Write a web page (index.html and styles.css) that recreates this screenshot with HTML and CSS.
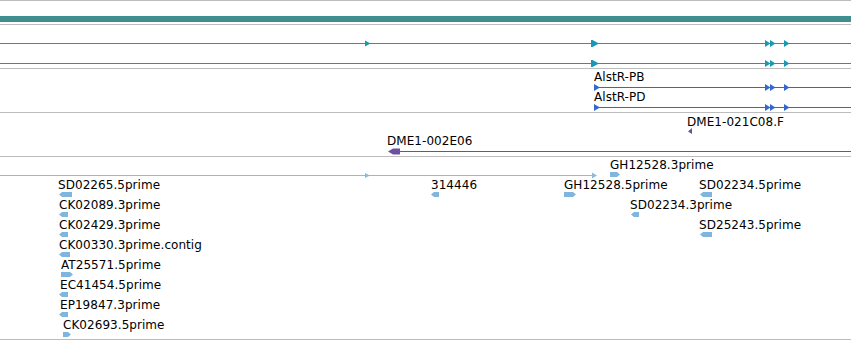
FILE: index.html
```html
<!DOCTYPE html>
<html>
<head>
<meta charset="utf-8">
<title>Tracks</title>
<link rel="stylesheet" href="styles.css">
</head>
<body>
<div class="panel">
  <div class="track t0"><div class="ruler"></div></div>

  <div class="track t1">
    <svg class="glyphs c-teal" width="851" height="43" viewBox="0 0 851 43">
      <rect x="0" y="18" width="851" height="1"/>
      <polygon points="365,15.5 370.5,18.5 365,21.5"/>
      <polygon points="591,15 592.5,15 599,18.5 592.5,22 591,22"/>
      <polygon points="765,15 770.5,18.5 765,22"/>
      <polygon points="770,15 775.5,18.5 770,22"/>
      <polygon points="784,15 789.5,18.5 784,22"/>
      <rect x="0" y="38" width="851" height="1"/>
      <polygon points="591,35 592.5,35 599,38.5 592.5,42 591,42"/>
      <polygon points="765,35 770.5,38.5 765,42"/>
      <polygon points="770,35 775.5,38.5 770,42"/>
      <polygon points="784,35 789.5,38.5 784,42"/>
    </svg>
  </div>

  <div class="track t2">
    <svg class="glyphs c-blue" width="851" height="43" viewBox="0 0 851 43">
      <rect x="594" y="18" width="257" height="1"/>
      <polygon points="594,15 600,18.5 594,22"/>
      <polygon points="765,15 770.5,18.5 765,22"/>
      <polygon points="770,15 775.5,18.5 770,22"/>
      <polygon points="784,15 789.5,18.5 784,22"/>
      <rect x="594" y="38" width="257" height="1"/>
      <polygon points="594,35 600,38.5 594,42"/>
      <polygon points="765,35 770.5,38.5 765,42"/>
      <polygon points="770,35 775.5,38.5 770,42"/>
      <polygon points="784,35 789.5,38.5 784,42"/>
    </svg>
    <span class="lbl" style="left:594px;top:1px">AlstR-PB</span>
    <span class="lbl" style="left:594px;top:21px">AlstR-PD</span>
  </div>

  <div class="track t3">
    <svg class="glyphs c-purple" width="851" height="43" viewBox="0 0 851 43">
      <polygon points="692,15 688,18.5 692,21"/>
      <rect x="392" y="38" width="459" height="1"/>
      <polygon points="388,38.5 393,35.5 400,35.5 400,41.5 393,41.5"/>
    </svg>
    <span class="lbl" style="left:687px;top:2px">DME1-021C08.F</span>
    <span class="lbl" style="left:387px;top:21px">DME1-002E06</span>
  </div>

  <div class="track t4">
    <svg class="glyphs c-light" width="851" height="182" viewBox="0 0 851 182">
      <rect class="thin" x="0" y="18" width="596" height="1"/>
      <polygon class="thin" points="365,16 370,18.5 365,21"/>
      <polygon class="thin" points="592,15.5 597,18.5 592,21.5"/>
      <polygon points="610,15 617,15 620,17.5 617,20 610,20"/>
      <polygon points="564,35 573,35 576,37.5 573,40 564,40"/>
      <polygon points="431,37.5 434,35 439,35 439,40 434,40"/>
      <polygon points="700,37.5 703,35 712,35 712,40 703,40"/>
      <polygon points="631,57.5 634,55 639,55 639,60 634,60"/>
      <polygon points="700,77.5 703,75 712,75 712,80 703,80"/>
      <polygon points="59,37.5 62,35 72,35 72,40 62,40"/>
      <polygon points="59,57.5 62,55 68,55 68,60 62,60"/>
      <polygon points="59,77.5 62,75 68,75 68,80 62,80"/>
      <polygon points="59,97.5 62,95 70,95 70,100 62,100"/>
      <polygon points="61,115 70,115 73,117.5 70,120 61,120"/>
      <polygon points="59,137.5 62,135 68,135 68,140 62,140"/>
      <polygon points="59,157.5 62,155 68,155 68,160 62,160"/>
      <polygon points="63,175 68,175 71,177.5 68,180 63,180"/>
    </svg>
    <span class="lbl" style="left:610px;top:1px">GH12528.3prime</span>
    <span class="lbl" style="left:564px;top:21px">GH12528.5prime</span>
    <span class="lbl" style="left:431px;top:21px">314446</span>
    <span class="lbl" style="left:699px;top:21px">SD02234.5prime</span>
    <span class="lbl" style="left:630px;top:41px">SD02234.3prime</span>
    <span class="lbl" style="left:699px;top:61px">SD25243.5prime</span>
    <span class="lbl" style="left:58px;top:21px">SD02265.5prime</span>
    <span class="lbl" style="left:59px;top:41px">CK02089.3prime</span>
    <span class="lbl" style="left:59px;top:61px">CK02429.3prime</span>
    <span class="lbl" style="left:59px;top:81px">CK00330.3prime.contig</span>
    <span class="lbl" style="left:61px;top:101px">AT25571.5prime</span>
    <span class="lbl" style="left:60px;top:121px">EC41454.5prime</span>
    <span class="lbl" style="left:60px;top:141px">EP19847.3prime</span>
    <span class="lbl" style="left:63px;top:161px">CK02693.5prime</span>
  </div>
</div>
</body>
</html>
```

FILE: styles.css
```css
html, body {
  margin: 0;
  padding: 0;
  background: #ffffff;
}

body {
  font-family: "DejaVu Sans", "Noto Sans", sans-serif;
}

.panel {
  width: 851px;
  height: 340px;
  overflow: hidden;
  display: flex;
  flex-direction: column;
}

.track {
  position: relative;
  flex: none;
  border-top: 1px solid #bdbdbd;
}

.t0 {
  padding: 15px 0 2px;
}

.ruler {
  height: 6px;
  background: #3f8f91;
}

.t1,
.t2,
.t3 {
  height: 43px;
}

.t4 {
  height: 182px;
  border-bottom: 1px solid #bdbdbd;
}

.glyphs {
  position: absolute;
  left: 0;
  top: 0;
  display: block;
}

.glyphs rect {
  shape-rendering: crispEdges;
}

.c-teal { fill: #1a97b2; }
.c-blue { fill: #3468cc; }
.c-purple { fill: #6c50a0; }
.c-light { fill: #80b6de; }
.c-light .thin { fill: #8dbbd9; }

.lbl {
  position: absolute;
  font-size: 12px;
  line-height: 14px;
  color: #000000;
  white-space: nowrap;
  letter-spacing: 0.05px;
}
```
